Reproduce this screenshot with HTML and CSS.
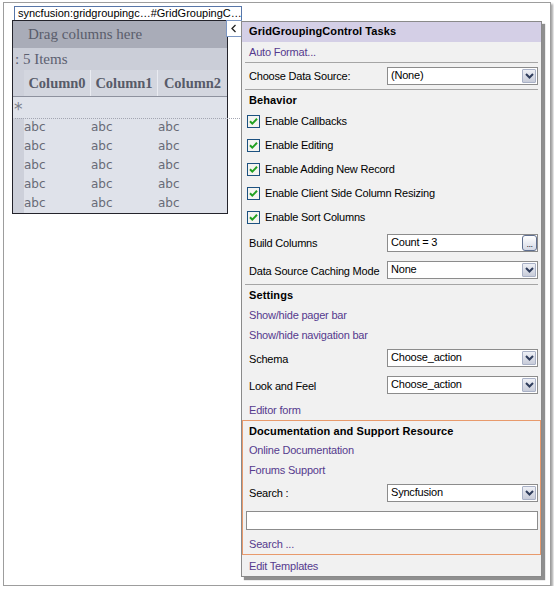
FILE: index.html
```html
<!DOCTYPE html>
<html>
<head>
<meta charset="utf-8">
<link rel="stylesheet" href="styles.css">
</head>
<body>
<div class="frame">
  <div class="tag">syncfusion:gridgroupingc…#GridGroupingC…</div>

  <div class="grid">
    <div class="drag">Drag columns here</div>
    <div class="items">: 5 Items</div>
    <div class="hdr">
      <div class="strip"></div>
      <div class="hc">Column0</div>
      <div class="hc">Column1</div>
      <div class="hc last">Column2</div>
    </div>
    <div class="newrow">*</div>
    <div class="drow"><div class="strip"></div><div class="dc">abc</div><div class="dc">abc</div><div class="dc">abc</div></div>
    <div class="drow"><div class="strip"></div><div class="dc">abc</div><div class="dc">abc</div><div class="dc">abc</div></div>
    <div class="drow"><div class="strip"></div><div class="dc">abc</div><div class="dc">abc</div><div class="dc">abc</div></div>
    <div class="drow"><div class="strip"></div><div class="dc">abc</div><div class="dc">abc</div><div class="dc">abc</div></div>
    <div class="drow"><div class="strip"></div><div class="dc">abc</div><div class="dc">abc</div><div class="dc">abc</div></div>
  </div>
  <div class="dotted"></div>

  <div class="collapse"><svg width="14" height="15" viewBox="0 0 14 15"><path d="M8.5 4 L5 7.5 L8.5 11" fill="none" stroke="#222" stroke-width="1.3"/></svg></div>

  <div class="panel">
    <div class="ph">GridGroupingControl Tasks</div>
    <div class="row h20"><span class="link">Auto Format...</span></div>
    <div class="sep"></div>
    <div class="row field h26"><span>Choose Data Source:</span><div class="select"><span>(None)</span><i class="dd"><svg width="15" height="14" viewBox="0 0 15 14"><path d="M4 5 L7.5 8.5 L11 5" fill="none" stroke="#2f3d5c" stroke-width="2"/></svg></i></div></div>
    <div class="sep"></div>
    <div class="row bold h19">Behavior</div>
    <div class="row chk"><svg class="cb" width="13" height="13" viewBox="0 0 13 13"><rect x="0.5" y="0.5" width="12" height="12" fill="#f4f4f0" stroke="#1c5180"/><path d="M3 6.2 L5.3 8.6 L10 3.8" fill="none" stroke="#21a121" stroke-width="2"/></svg><span>Enable Callbacks</span></div>
    <div class="row chk"><svg class="cb" width="13" height="13" viewBox="0 0 13 13"><rect x="0.5" y="0.5" width="12" height="12" fill="#f4f4f0" stroke="#1c5180"/><path d="M3 6.2 L5.3 8.6 L10 3.8" fill="none" stroke="#21a121" stroke-width="2"/></svg><span>Enable Editing</span></div>
    <div class="row chk"><svg class="cb" width="13" height="13" viewBox="0 0 13 13"><rect x="0.5" y="0.5" width="12" height="12" fill="#f4f4f0" stroke="#1c5180"/><path d="M3 6.2 L5.3 8.6 L10 3.8" fill="none" stroke="#21a121" stroke-width="2"/></svg><span>Enable Adding New Record</span></div>
    <div class="row chk"><svg class="cb" width="13" height="13" viewBox="0 0 13 13"><rect x="0.5" y="0.5" width="12" height="12" fill="#f4f4f0" stroke="#1c5180"/><path d="M3 6.2 L5.3 8.6 L10 3.8" fill="none" stroke="#21a121" stroke-width="2"/></svg><span>Enable Client Side Column Resizing</span></div>
    <div class="row chk"><svg class="cb" width="13" height="13" viewBox="0 0 13 13"><rect x="0.5" y="0.5" width="12" height="12" fill="#f4f4f0" stroke="#1c5180"/><path d="M3 6.2 L5.3 8.6 L10 3.8" fill="none" stroke="#21a121" stroke-width="2"/></svg><span>Enable Sort Columns</span></div>
    <div class="row field h28"><span>Build Columns</span><div class="select"><span>Count = 3</span><i class="ell">...</i></div></div>
    <div class="row field h27"><span>Data Source Caching Mode</span><div class="select"><span>None</span><i class="dd"><svg width="15" height="14" viewBox="0 0 15 14"><path d="M4 5 L7.5 8.5 L11 5" fill="none" stroke="#2f3d5c" stroke-width="2"/></svg></i></div></div>
    <div class="sep"></div>
    <div class="row bold h20">Settings</div>
    <div class="row h20"><span class="link">Show/hide pager bar</span></div>
    <div class="row h20"><span class="link">Show/hide navigation bar</span></div>
    <div class="row field h27"><span>Schema</span><div class="select"><span>Choose_action</span><i class="dd"><svg width="15" height="14" viewBox="0 0 15 14"><path d="M4 5 L7.5 8.5 L11 5" fill="none" stroke="#2f3d5c" stroke-width="2"/></svg></i></div></div>
    <div class="row field h27"><span>Look and Feel</span><div class="select"><span>Choose_action</span><i class="dd"><svg width="15" height="14" viewBox="0 0 15 14"><path d="M4 5 L7.5 8.5 L11 5" fill="none" stroke="#2f3d5c" stroke-width="2"/></svg></i></div></div>
    <div class="row h21"><span class="link">Editor form</span></div>
    <div class="docs">
      <div class="row bold h19">Documentation and Support Resource</div>
      <div class="row h20"><span class="link">Online Documentation</span></div>
      <div class="row h20"><span class="link">Forums Support</span></div>
      <div class="row field h26"><span>Search :</span><div class="select"><span>Syncfusion</span><i class="dd"><svg width="15" height="14" viewBox="0 0 15 14"><path d="M4 5 L7.5 8.5 L11 5" fill="none" stroke="#2f3d5c" stroke-width="2"/></svg></i></div></div>
      <div class="row inrow h28"><div class="textbox"></div></div>
      <div class="row h20"><span class="link">Search ...</span></div>
    </div>
    <div class="row h21"><span class="link">Edit Templates</span></div>
  </div>
</div>
</body>
</html>
```

FILE: styles.css
```css
html, body {
  margin: 0;
  padding: 0;
  background: #ffffff;
}

.frame {
  position: relative;
  box-sizing: border-box;
  margin: 2px 0 0 3px;
  width: 548px;
  height: 584px;
  border: 1px solid #9d9d9d;
  background: #ffffff;
  box-shadow: 2px 2px 2px #a8a8a8;
}

.tag {
  position: absolute;
  left: 10px;
  top: 3px;
  box-sizing: border-box;
  width: 228px;
  height: 14px;
  border: 1px solid #5876a8;
  border-bottom: none;
  background: #fff;
  font: 11px/13px "Liberation Sans", Arial, sans-serif;
  letter-spacing: 0px;
  color: #000;
  padding-left: 3px;
  white-space: nowrap;
  overflow: hidden;
}

/* grid control */
.grid {
  position: absolute;
  left: 8px;
  top: 17px;
  box-sizing: border-box;
  width: 216px;
  height: 194px;
  border: 1px solid #23232b;
  background: #dfe2ea;
  display: flex;
  flex-direction: column;
  font-family: "Liberation Serif", "Times New Roman", serif;
  color: #5c6070;
}

.drag {
  height: 27px;
  background: #a9acb8;
  font-size: 15px;
  line-height: 27px;
  padding-left: 15px;
  color: #5a5d6b;
}

.items {
  height: 22px;
  background: #cbced8;
  font-size: 15px;
  line-height: 22px;
  padding-left: 2px;
}

.hdr {
  height: 26px;
  display: flex;
  border-bottom: 1px solid #8d919e;
  background: #cdd0da;
}

.strip {
  width: 11px;
  flex: none;
  background: #cdd0da;
}

.hc {
  width: 66px;
  flex: none;
  background: #d3d6df;
  border-right: 1px solid #e9ebf1;
  text-align: center;
  font-weight: bold;
  font-size: 14.5px;
  line-height: 26px;
  color: #575b69;
}

.hc.last {
  border-right: none;
  flex: 1;
}

.newrow {
  height: 21px;
  font-family: "DejaVu Sans", sans-serif;
  font-size: 17px;
  line-height: 24px;
  padding-left: 1px;
  color: #7c7f8b;
  background: #dfe2ea;
}

.drow {
  height: 19px;
  display: flex;
}

.dc {
  width: 67px;
  flex: none;
  font-family: "DejaVu Sans", Verdana, sans-serif;
  font-size: 12px;
  line-height: 19px;
  color: #686b77;
}

.dotted {
  position: absolute;
  left: 11px;
  top: 115px;
  width: 225px;
  height: 0;
  border-top: 1px dotted #a3a6b2;
}

.collapse {
  position: absolute;
  left: 222px;
  top: 17px;
  box-sizing: border-box;
  width: 16px;
  height: 17px;
  border: 1px solid #7c97c4;
  background: #fff;
}

.collapse svg {
  display: block;
}

/* smart tag panel */
.panel {
  position: absolute;
  left: 237px;
  top: 18px;
  box-sizing: border-box;
  width: 301px;
  height: 556px;
  border: 1px solid #8a8a8a;
  background: #f1f1f1;
  box-shadow: 3px 3px 1px #8f8f8f;
  font: 11px "Liberation Sans", Arial, sans-serif;
  letter-spacing: -0.2px;
  color: #000;
  display: flex;
  flex-direction: column;
}

.ph {
  height: 20px;
  flex: none;
  background: #d4cfe6;
  font-weight: bold;
  letter-spacing: 0.1px;
  line-height: 19px;
  padding-left: 7px;
}

.row {
  display: flex;
  align-items: center;
  padding-left: 7px;
  flex: none;
  white-space: nowrap;
}

.h19 { height: 19px; }
.h20 { height: 20px; }
.h21 { height: 21px; }
.h26 { height: 26px; }
.h27 { height: 27px; }
.h28 { height: 28px; }

.bold {
  font-weight: bold;
  letter-spacing: 0.1px;
}

.link {
  color: #553a8e;
}

.sep {
  height: 1px;
  flex: none;
  margin: 0 3px 0 3px;
  background: #a5a5a5;
}

.chk {
  height: 24px;
  padding-left: 5px;
  gap: 5px;
}

.cb {
  display: block;
  flex: none;
}

.field {
  justify-content: space-between;
  padding-right: 3px;
}

.select {
  position: relative;
  box-sizing: border-box;
  width: 151px;
  height: 18px;
  border: 1px solid #8c8c8c;
  background: #fff;
  padding-left: 3px;
  line-height: 15px;
  margin-top: -1px;
}

.dd {
  position: absolute;
  right: 1px;
  top: 1px;
  width: 14px;
  height: 14px;
  box-sizing: border-box;
  border: 1px solid #a9b1c6;
  background: linear-gradient(#eef0f6, #c8ccd9);
  border-radius: 1px;
  overflow: hidden;
}

.dd svg {
  display: block;
  margin: -1px 0 0 -1px;
}

.ell {
  position: absolute;
  right: 0px;
  top: 0px;
  width: 15px;
  height: 16px;
  box-sizing: border-box;
  border: 1px solid #5f6f90;
  border-radius: 3px;
  background: linear-gradient(#ffffff, #d5d9e6);
  font-style: normal;
  font-size: 9px;
  line-height: 17px;
  text-align: center;
  letter-spacing: -0.5px;
  color: #223;
}

.docs {
  flex: none;
  border: 1px solid #e89a6c;
  display: flex;
  flex-direction: column;
}

.docs .row {
  padding-left: 6px;
}

.docs .field {
  padding-right: 2px;
}

.inrow {
  padding-left: 3px !important;
  padding-right: 2px;
}

.textbox {
  box-sizing: border-box;
  width: 100%;
  height: 19px;
  border: 1px solid #8c8c8c;
  background: #fff;
}
```
